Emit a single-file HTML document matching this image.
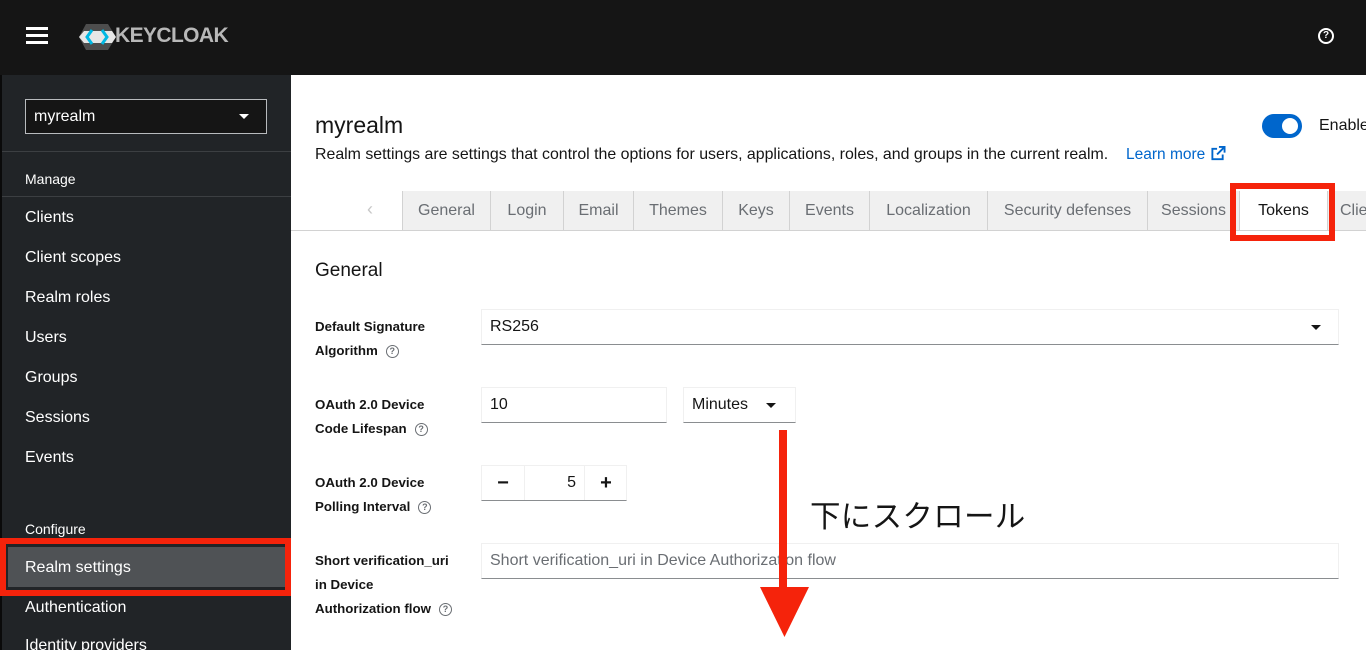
<!DOCTYPE html>
<html><head><meta charset="utf-8"><style>
*{box-sizing:border-box;margin:0;padding:0}
body{width:1366px;height:650px;overflow:hidden;font-family:"Liberation Sans","Noto Sans CJK JP",sans-serif;background:#fff;position:relative}
.abs{position:absolute}
#hdr{left:0;top:0;width:1366px;height:75px;background:#151515}
#side{left:0;top:75px;width:291px;height:575px;background:#212427;border-left:2px solid #0a0a0a}
.nav{position:absolute;left:25px;color:#fff;font-size:16px}
.tab{position:absolute;top:191px;height:39px;background:#f0f0f0;border-right:1px solid #d2d2d2;color:#6a6e73;font-size:16px;line-height:40px;text-align:center}
.lbl{position:absolute;left:315px;font-size:13.3px;font-weight:bold;color:#151515;line-height:24px}
.inp{position:absolute;border:1px solid #f0f0f0;border-bottom:1px solid #8a8d90;font-size:16px;color:#151515;padding-left:8px;line-height:34px}
.q{display:inline-block;width:13px;height:13px;border:1.3px solid #6a6e73;border-radius:50%;font-size:9px;line-height:11px;text-align:center;color:#6a6e73;margin-left:8px;vertical-align:1px;font-weight:bold}
</style></head><body>
<div id="hdr" class="abs">
 <div class="abs" style="left:26px;top:27px;width:22px;height:3px;background:#fff;box-shadow:0 7px 0 #fff,0 14px 0 #fff"></div>
 <svg class="abs" style="left:78px;top:22px" width="40" height="30" viewBox="0 0 40 30"><polygon points="8,2 30,2 38,15 30,28 8,28 1,15" fill="#4d4d4d"/><polygon points="1,15 6,9 34,9 38,15 34,21 6,21" fill="#e6e6e6"/><path d="M14 8 L9 15 L14 22" stroke="#00b8e3" stroke-width="3" fill="none"/><path d="M24 8 L29 15 L24 22" stroke="#00b8e3" stroke-width="3" fill="none"/></svg>
 <div class="abs" style="left:115px;top:24px;color:#b8b8b8;font-size:21px;font-weight:bold;letter-spacing:-0.6px">KEYCLOAK</div>
 <div class="abs" style="left:1318px;top:28px;width:16px;height:16px;border:2px solid #fff;border-radius:50%;color:#fff;font-size:10px;font-weight:bold;text-align:center;line-height:12px">?</div>
</div>
<div id="side" class="abs">
 <div class="abs" style="left:23px;top:24px;width:242px;height:35px;border:1px solid #b8bbbe;background:#151515;color:#fff;font-size:16px;line-height:34px;padding-left:8px">myrealm<span style="position:absolute;right:17px;top:14px;border:5px solid transparent;border-top:5px solid #fff"></span></div>
 <div class="abs" style="left:0;top:76px;width:289px;height:1px;background:#3c3f42"></div>
 <div class="abs" style="left:0;top:121px;width:289px;height:1px;background:#3c3f42"></div>
</div>
<div class="nav" style="top:171px;font-size:14px">Manage</div>
<div class="nav" style="top:209px">Clients</div>
<div class="nav" style="top:249px">Client scopes</div>
<div class="nav" style="top:289px">Realm roles</div>
<div class="nav" style="top:329px">Users</div>
<div class="nav" style="top:369px">Groups</div>
<div class="nav" style="top:409px">Sessions</div>
<div class="nav" style="top:449px">Events</div>
<div class="nav" style="top:521px;font-size:14px">Configure</div>
<div class="abs" style="left:0;top:538px;width:291px;height:58px;border:6px solid #f5230b;background:#212427"><div style="position:absolute;left:2px;top:3px;width:277px;height:40px;background:#4f5255"></div></div>
<div class="nav" style="top:559px">Realm settings</div>
<div class="nav" style="top:599px">Authentication</div>
<div class="nav" style="top:637px">Identity providers</div>

<div class="abs" style="left:315px;top:112px;font-size:23px;color:#151515">myrealm</div>
<div class="abs" style="left:315px;top:146px;font-size:15.9px;color:#151515">Realm settings are settings that control the options for users, applications, roles, and groups in the current realm.</div>
<div class="abs" style="left:1126px;top:146px;font-size:15.5px;color:#0066cc">Learn more <svg width="16" height="15" viewBox="0 0 16 16" style="vertical-align:-2px"><path d="M7 3H2v11h11V9" stroke="#0066cc" stroke-width="2" fill="none"/><path d="M9 1h6v6M15 1L7 9" stroke="#0066cc" stroke-width="2" fill="none"/></svg></div>
<div class="abs" style="left:1262px;top:114px;width:40px;height:24px;border-radius:12px;background:#0066cc"><div style="position:absolute;right:4px;top:4px;width:16px;height:16px;border-radius:50%;background:#fff"></div></div>
<div class="abs" style="left:1319px;top:117px;font-size:16px;color:#151515">Enable</div>

<div class="abs" style="left:291px;top:230px;width:1075px;height:1px;background:#d2d2d2"></div>
<div class="abs" style="left:367px;top:199px;color:#c7c7c7;font-size:18px">&#8249;</div>
<div class="tab" style="left:402px;width:89px;border-left:1px solid #d2d2d2">General</div>
<div class="tab" style="left:491px;width:73px">Login</div>
<div class="tab" style="left:564px;width:70px">Email</div>
<div class="tab" style="left:634px;width:89px">Themes</div>
<div class="tab" style="left:723px;width:67px">Keys</div>
<div class="tab" style="left:790px;width:80px">Events</div>
<div class="tab" style="left:870px;width:118px">Localization</div>
<div class="tab" style="left:988px;width:160px">Security defenses</div>
<div class="tab" style="left:1148px;width:92px">Sessions</div>
<div class="tab" style="left:1240px;width:88px;background:#fff;color:#151515">Tokens</div>
<div class="tab" style="left:1328px;width:60px;text-align:left;padding-left:12px">Clients</div>
<div class="abs" style="left:1230px;top:183px;width:105px;height:58px;border:6px solid #f5230b"></div>

<div class="abs" style="left:315px;top:260px;font-size:19px;color:#151515">General</div>

<div class="lbl" style="top:315px">Default Signature<br>Algorithm<span class="q">?</span></div>
<div class="inp" style="left:481px;top:309px;width:858px;height:36px">RS256<span style="position:absolute;right:17px;top:15px;border:5px solid transparent;border-top:5px solid #151515"></span></div>

<div class="lbl" style="top:393px">OAuth 2.0 Device<br>Code Lifespan<span class="q">?</span></div>
<div class="inp" style="left:481px;top:387px;width:186px;height:36px">10</div>
<div class="inp" style="left:683px;top:387px;width:113px;height:36px">Minutes<span style="position:absolute;right:19px;top:15px;border:5px solid transparent;border-top:5px solid #151515"></span></div>

<div class="lbl" style="top:471px">OAuth 2.0 Device<br>Polling Interval<span class="q">?</span></div>
<div class="inp" style="left:481px;top:465px;width:146px;height:36px;padding:0">
 <div style="position:absolute;left:0;top:0;width:43px;height:34px;border-right:1px solid #f0f0f0;text-align:center;font-size:20px;font-weight:bold">−</div>
 <div style="position:absolute;left:43px;width:59px;text-align:right;padding-right:8px">5</div>
 <div style="position:absolute;left:102px;top:0;width:43px;height:34px;border-left:1px solid #f0f0f0;text-align:center;font-size:20px;font-weight:bold">+</div>
</div>

<div class="lbl" style="top:549px">Short verification_uri<br>in Device<br>Authorization flow<span class="q">?</span></div>
<div class="inp" style="left:481px;top:543px;width:858px;height:36px;color:#6a6e73">Short verification_uri in Device Authorization flow</div>

<div class="abs" style="left:810px;top:492px;font-size:30.5px;color:#151515;letter-spacing:0.3px">下にスクロール</div>
<div class="abs" style="left:779px;top:430px;width:8px;height:162px;background:#f5230b"></div>
<svg class="abs" style="left:760px;top:587px" width="49" height="50"><polygon points="0,0 49,0 24.5,50" fill="#f5230b"/></svg>
</body></html>
